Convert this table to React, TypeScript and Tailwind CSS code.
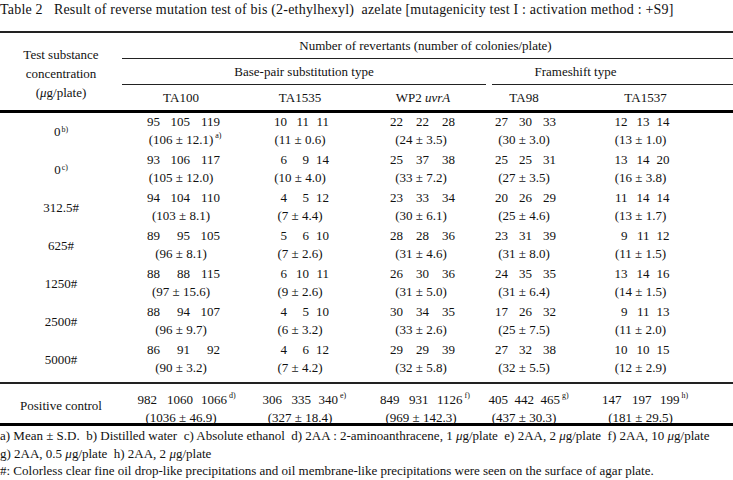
const COLS = "grid grid-cols-[122px_118px_118px_130px_72px_173px]";

type Cell = { n: [string, string, string]; mean: string; sup?: string; supOnMean?: boolean };

type Row = { label: string; sup?: string; cells: Cell[] };

const SLOTS: [string, string, string][] = [
  ["w-[18px]", "w-[30px]", "w-[30px]"],
  ["w-[16px]", "w-[22px]", "w-[20px]"],
  ["w-[16px]", "w-[26px]", "w-[26px]"],
  ["w-[16px]", "w-[24px]", "w-[24px]"],
  ["w-[16px]", "w-[22px]", "w-[20px]"],
];

const POS_SLOTS: [string, string, string][] = [
  ["w-[22px]", "w-[36px]", "w-[34px]"],
  ["w-[20px]", "w-[29px]", "w-[27px]"],
  ["w-[20px]", "w-[29px]", "w-[34px]"],
  ["w-[20px]", "w-[26px]", "w-[26px]"],
  ["w-[20px]", "w-[30px]", "w-[28px]"],
];

const rows: Row[] = [
  {
    label: "0",
    sup: "b)",
    cells: [
      { n: ["95", "105", "119"], mean: "(106 ± 12.1)", sup: "a)", supOnMean: true },
      { n: ["10", "11", "11"], mean: "(11 ± 0.6)" },
      { n: ["22", "22", "28"], mean: "(24 ± 3.5)" },
      { n: ["27", "30", "33"], mean: "(30 ± 3.0)" },
      { n: ["12", "13", "14"], mean: "(13 ± 1.0)" },
    ],
  },
  {
    label: "0",
    sup: "c)",
    cells: [
      { n: ["93", "106", "117"], mean: "(105 ± 12.0)" },
      { n: ["6", "9", "14"], mean: "(10 ± 4.0)" },
      { n: ["25", "37", "38"], mean: "(33 ± 7.2)" },
      { n: ["25", "25", "31"], mean: "(27 ± 3.5)" },
      { n: ["13", "14", "20"], mean: "(16 ± 3.8)" },
    ],
  },
  {
    label: "312.5#",
    cells: [
      { n: ["94", "104", "110"], mean: "(103 ± 8.1)" },
      { n: ["4", "5", "12"], mean: "(7 ± 4.4)" },
      { n: ["23", "33", "34"], mean: "(30 ± 6.1)" },
      { n: ["20", "26", "29"], mean: "(25 ± 4.6)" },
      { n: ["11", "14", "14"], mean: "(13 ± 1.7)" },
    ],
  },
  {
    label: "625#",
    cells: [
      { n: ["89", "95", "105"], mean: "(96 ± 8.1)" },
      { n: ["5", "6", "10"], mean: "(7 ± 2.6)" },
      { n: ["28", "28", "36"], mean: "(31 ± 4.6)" },
      { n: ["23", "31", "39"], mean: "(31 ± 8.0)" },
      { n: ["9", "11", "12"], mean: "(11 ± 1.5)" },
    ],
  },
  {
    label: "1250#",
    cells: [
      { n: ["88", "88", "115"], mean: "(97 ± 15.6)" },
      { n: ["6", "10", "11"], mean: "(9 ± 2.6)" },
      { n: ["26", "30", "36"], mean: "(31 ± 5.0)" },
      { n: ["24", "35", "35"], mean: "(31 ± 6.4)" },
      { n: ["13", "14", "16"], mean: "(14 ± 1.5)" },
    ],
  },
  {
    label: "2500#",
    cells: [
      { n: ["88", "94", "107"], mean: "(96 ± 9.7)" },
      { n: ["4", "5", "10"], mean: "(6 ± 3.2)" },
      { n: ["30", "34", "35"], mean: "(33 ± 2.6)" },
      { n: ["17", "26", "32"], mean: "(25 ± 7.5)" },
      { n: ["9", "11", "13"], mean: "(11 ± 2.0)" },
    ],
  },
  {
    label: "5000#",
    cells: [
      { n: ["86", "91", "92"], mean: "(90 ± 3.2)" },
      { n: ["4", "6", "12"], mean: "(7 ± 4.2)" },
      { n: ["29", "29", "39"], mean: "(32 ± 5.8)" },
      { n: ["27", "32", "38"], mean: "(32 ± 5.5)" },
      { n: ["10", "10", "15"], mean: "(12 ± 2.9)" },
    ],
  },
];

const positive: Cell[] = [
  { n: ["982", "1060", "1066"], mean: "(1036 ± 46.9)", sup: "d)" },
  { n: ["306", "335", "340"], mean: "(327 ± 18.4)", sup: "e)" },
  { n: ["849", "931", "1126"], mean: "(969 ± 142.3)", sup: "f)" },
  { n: ["405", "442", "465"], mean: "(437 ± 30.3)", sup: "g)" },
  { n: ["147", "197", "199"], mean: "(181 ± 29.5)", sup: "h)" },
];

function Sup({ children }: { children: string }) {
  return <span className="relative -top-[4px] ml-[1px] text-[8px]">{children}</span>;
}

function DataCell({ cell, slots, shift }: { cell: Cell; slots: [string, string, string]; shift: string }) {
  return (
    <div className={"flex flex-col items-center leading-[18px] " + shift}>
      <div className="relative flex">
        {cell.n.map((v, i) => (
          <span key={i} className={"text-right " + slots[i]}>
            {v}
          </span>
        ))}
        {cell.sup && !cell.supOnMean ? (
          <span className="absolute left-full -top-[4px] ml-[2px] text-[8px]">{cell.sup}</span>
        ) : null}
      </div>
      <div className="relative whitespace-nowrap">
        {cell.mean}
        {cell.sup && cell.supOnMean ? (
          <span className="absolute left-full -top-[4px] ml-[2px] text-[8px]">{cell.sup}</span>
        ) : null}
      </div>
    </div>
  );
}

const SHIFTS = ["pl-[0px]", "pl-[2px]", "pr-[4px]", "pl-[0px]", "pr-[12px]"];

export default function App() {
  return (
    <div className="h-[480px] w-[733px] bg-white font-[family-name:'Liberation_Serif',serif] text-[13px] text-[#111]">
      <div className="h-[20px] whitespace-nowrap text-[14px] leading-[20px] tracking-[0.2px]">
        Table 2&nbsp;&nbsp;&nbsp;Result of reverse mutation test of bis (2-ethylhexyl)&nbsp; azelate [mutagenicity test I : activation method : +S9]
      </div>

      <div className="mt-[11px] border-t-2 border-[#222]">
        <div className={COLS + " grid-rows-[26px_26px_25px] border-b-[3px] border-black"}>
          <div className="row-span-3 flex flex-col items-center justify-center pt-[3px] leading-[19px]">
            <span>Test substance</span>
            <span>concentration</span>
            <span>
              (<i>μ</i>g/plate)
            </span>
          </div>
          <div className="col-span-5 flex items-center justify-center border-b border-[#222] pr-[4px]">
            Number of revertants (number of colonies/plate)
          </div>
          <div className="col-span-3 mr-[2px] flex items-center justify-center border-b border-[#222]">
            Base-pair substitution type
          </div>
          <div className="col-span-2 ml-[4px] flex items-center justify-center border-b border-[#222] pr-[74px]">
            Frameshift type
          </div>
          <div className="flex items-center justify-center">TA100</div>
          <div className="flex items-center justify-center pl-[2px]">TA1535</div>
          <div className="flex items-center justify-center">
            WP2&nbsp;<i>uvrA</i>
          </div>
          <div className="flex items-center justify-center">TA98</div>
          <div className="flex items-center justify-center pr-[2px]">TA1537</div>
        </div>

        <div className="pb-[3px]">
          {rows.map((r, ri) => (
            <div key={ri} className={COLS + " h-[38px]"}>
              <div className="flex items-center justify-center">
                <span>
                  {r.label}
                  {r.sup ? <Sup>{r.sup}</Sup> : null}
                </span>
              </div>
              {r.cells.map((c, ci) => (
                <DataCell key={ci} cell={c} slots={SLOTS[ci]} shift={SHIFTS[ci]} />
              ))}
            </div>
          ))}
        </div>

        <div className={COLS + " h-[44px] border-y-2 border-t-[#222] border-b-[3px] border-b-black pt-[7px]"}>
          <div className="-mt-[7px] flex items-center justify-center">Positive control</div>
          {positive.map((c, ci) => (
            <DataCell key={ci} cell={c} slots={POS_SLOTS[ci]} shift={SHIFTS[ci]} />
          ))}
        </div>
      </div>

      <div className="mt-[1px] whitespace-nowrap leading-[17.5px]">
        <div>
          a) Mean ± S.D.&nbsp; b) Distilled water&nbsp; c) Absolute ethanol&nbsp; d) 2AA : 2-aminoanthracene, 1 <i>μ</i>g/plate&nbsp; e) 2AA, 2 <i>μ</i>g/plate&nbsp; f) 2AA, 10 <i>μ</i>g/plate
        </div>
        <div>
          g) 2AA, 0.5 <i>μ</i>g/plate&nbsp; h) 2AA, 2 <i>μ</i>g/plate
        </div>
        <div>
          #: Colorless clear fine oil drop-like precipitations and oil membrane-like precipitations were seen on the surface of agar plate.
        </div>
      </div>
    </div>
  );
}
